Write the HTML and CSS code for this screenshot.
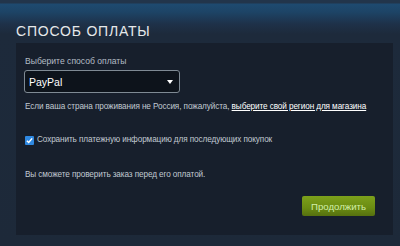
FILE: index.html
```html
<!DOCTYPE html>
<html lang="ru">
<head>
    <meta charset="UTF-8">
    <title>Способ оплаты</title>
    <link rel="stylesheet" href="styles.css">
</head>
<body>

<div class="page">
    <h2 class="page-title">СПОСОБ ОПЛАТЫ</h2>

    <div class="panel">
        <div class="field-label">Выберите способ оплаты</div>
        <div class="select">
            <span>PayPal</span>
            <span class="caret"></span>
        </div>

        <p class="note">Если ваша страна проживания не Россия, пожалуйста, <a href="#">выберите свой регион для магазина</a></p>

        <label class="check-row">
            <span class="checkbox">
                <svg width="7" height="7" viewBox="0 0 8 8"><path d="M1 4.2 L3.1 6.3 L7 1.6" fill="none" stroke="#fff" stroke-width="1.7"/></svg>
            </span>
            Сохранить платежную информацию для последующих покупок
        </label>

        <p class="note review">Вы сможете проверить заказ перед его оплатой.</p>

        <div class="actions">
            <button class="btn-green">Продолжить</button>
        </div>
    </div>
</div>

</body>
</html>
```

FILE: styles.css
```css
body {
    margin: 0;
    height: 246px;
    overflow: hidden;
    font-family: "Liberation Sans", Arial, sans-serif;
    background: linear-gradient(to bottom, #22354b 0px, #22354b 3px, #1e4a70 4px, #1d4466 12px, #1e3149 24px, #1d2a3b 34px, #1d2939 100%);
    color: #c6d4df;
}

.page {
    padding: 23px 7px 0 16px;
}

.page-title {
    margin: 0 0 4px;
    font-size: 14px;
    font-weight: normal;
    letter-spacing: 0.8px;
    color: #e5e8ea;
    line-height: 16px;
}

.panel {
    background: #171f2c;
    height: 192px;
    box-sizing: border-box;
    padding: 12px 9px 0 9px;
}

.field-label {
    font-size: 8.6px;
    line-height: 12px;
    color: #b3bcc5;
    margin-bottom: 3px;
}

.select {
    width: 156px;
    height: 23px;
    box-sizing: border-box;
    border: 1px solid #7f8a94;
    border-radius: 3px;
    background: #0d131b;
    display: flex;
    align-items: center;
    justify-content: space-between;
    padding: 0 6px 0 4px;
    margin-left: -1px;
    color: #fff;
    font-size: 10.5px;
}

.caret {
    width: 0;
    height: 0;
    border-left: 3.5px solid transparent;
    border-right: 3.5px solid transparent;
    border-top: 4px solid #fff;
}

.note {
    margin: 8px 0 0;
    font-size: 8.2px;
    line-height: 12px;
    letter-spacing: -0.1px;
    color: #c0c9d1;
}

.note a {
    color: #fff;
    text-decoration: underline;
}

.check-row {
    display: flex;
    align-items: center;
    gap: 3px;
    margin-top: 21px;
    font-size: 8.2px;
    line-height: 12px;
    letter-spacing: -0.1px;
    color: #c0c9d1;
}

.checkbox {
    width: 9px;
    height: 9px;
    background: #2f89e2;
    border-radius: 1px;
    display: flex;
    align-items: center;
    justify-content: center;
}

.review {
    margin-top: 23px;
}

.actions {
    display: flex;
    justify-content: flex-end;
    margin-top: 15px;
    padding-right: 9px;
}

.btn-green {
    width: 73px;
    height: 20px;
    border: none;
    border-radius: 2px;
    background: linear-gradient(to bottom, #7ca01b 0%, #6a8b12 60%, #56700f 100%);
    color: #d2efa9;
    font-family: "Liberation Sans", Arial, sans-serif;
    font-size: 9.6px;
    padding: 0;
}
```
